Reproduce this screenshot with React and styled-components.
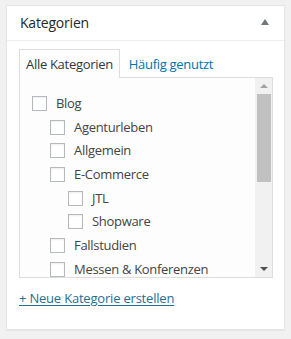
import React from "react";
import styled, { createGlobalStyle } from "styled-components";

const Global = createGlobalStyle`
  html, body { margin: 0; padding: 0; background: #f1f1f1; }
  body { font-family: "Open Sans", "Noto Sans", sans-serif; color: #444; -webkit-font-smoothing: antialiased; }
  * { box-sizing: border-box; }
`;

const Page = styled.div`
  padding: 5px 0 0 6px;
  width: 291px;
  height: 339px;
`;

const Panel = styled.div`
  width: 279px;
  background: #fff;
  border: 1px solid #e5e5e5;
  box-shadow: 0 1px 1px rgba(0, 0, 0, 0.04);
`;

const Header = styled.div`
  height: 35px;
  display: flex;
  align-items: center;
  justify-content: space-between;
  padding: 0 12px 0 13px;
  border-bottom: 1px solid #eee;
`;

const Title = styled.h2`
  margin: 0;
  font-size: 14px;
  font-weight: 400;
  letter-spacing: -0.2px;
  color: #23282d;
  line-height: 1;
`;

const Toggle = styled.span`
  width: 0;
  height: 0;
  border-left: 4px solid transparent;
  border-right: 4px solid transparent;
  border-bottom: 6px solid #72777c;
  margin-right: 3px;
  margin-top: -2px;
`;

const Body = styled.div`
  padding: 8px 11px 21px 12px;
`;

const Tabs = styled.div`
  display: flex;
  gap: 2px;
  position: relative;
  z-index: 1;
  margin-bottom: -1px;
`;

const Tab = styled.div`
  height: 29px;
  display: flex;
  align-items: center;
  padding: 0 6px 1px 6px;
  font-size: 13px;
  letter-spacing: -0.3px;
  border: 1px solid ${(p) => (p.$active ? "#ddd" : "transparent")};
  border-bottom: none;
  background: ${(p) => (p.$active ? "#fdfdfd" : "transparent")};
  color: ${(p) => (p.$active ? "#32373c" : "#0073aa")};
`;

const Box = styled.div`
  height: 201px;
  border: 1px solid #ddd;
  background: #fdfdfd;
  display: flex;
  overflow: hidden;
`;

const List = styled.ul`
  flex: 1;
  list-style: none;
  margin: 0;
  padding: 13px 0 0 12px;
  overflow: hidden;
`;

const Row = styled.li`
  height: 23.7px;
  display: flex;
  align-items: center;
  padding-left: ${(p) => p.$level * 18}px;
  font-size: 13px;
  letter-spacing: -0.3px;
  color: #444;
  white-space: nowrap;
`;

const Check = styled.span`
  width: 15px;
  height: 15px;
  flex: none;
  border: 1px solid #b4b9be;
  background: #fff;
  box-shadow: inset 0 1px 2px rgba(0, 0, 0, 0.07);
  margin-right: 9px;
  margin-top: 1px;
`;

const Scrollbar = styled.div`
  width: 17px;
  flex: none;
  background: #f1f1f1;
  display: flex;
  flex-direction: column;
  align-items: center;
`;

const ScrollButton = styled.div`
  height: 16px;
  width: 100%;
  display: flex;
  align-items: center;
  justify-content: center;
`;

const Arrow = styled.span`
  width: 0;
  height: 0;
  border-left: 4px solid transparent;
  border-right: 4px solid transparent;
  ${(p) =>
    p.$down
      ? `border-top: 4px solid #505050;`
      : `border-bottom: 4px solid #a3a3a3;`}
`;

const Thumb = styled.div`
  width: 14px;
  height: 88px;
  background: #c1c1c1;
`;

const Spacer = styled.div`
  flex: 1;
`;

const AddLink = styled.a`
  display: inline-block;
  margin-top: 11px;
  font-size: 13px;
  letter-spacing: -0.2px;
  line-height: 19px;
  color: #1f6f93;
  text-decoration: underline;
  text-underline-offset: 2px;
  cursor: pointer;
`;

const categories = [
  { name: "Blog", level: 0 },
  { name: "Agenturleben", level: 1 },
  { name: "Allgemein", level: 1 },
  { name: "E-Commerce", level: 1 },
  { name: "JTL", level: 2 },
  { name: "Shopware", level: 2 },
  { name: "Fallstudien", level: 1 },
  { name: "Messen & Konferenzen", level: 1 },
];

export default function App() {
  return (
    <>
      <Global />
      <Page>
        <Panel>
          <Header>
            <Title>Kategorien</Title>
            <Toggle />
          </Header>
          <Body>
            <Tabs>
              <Tab $active>Alle Kategorien</Tab>
              <Tab>Häufig genutzt</Tab>
            </Tabs>
            <Box>
              <List>
                {categories.map((c) => (
                  <Row key={c.name} $level={c.level}>
                    <Check />
                    {c.name}
                  </Row>
                ))}
              </List>
              <Scrollbar>
                <ScrollButton>
                  <Arrow />
                </ScrollButton>
                <Thumb />
                <Spacer />
                <ScrollButton>
                  <Arrow $down />
                </ScrollButton>
              </Scrollbar>
            </Box>
            <AddLink>+ Neue Kategorie erstellen</AddLink>
          </Body>
        </Panel>
      </Page>
    </>
  );
}
